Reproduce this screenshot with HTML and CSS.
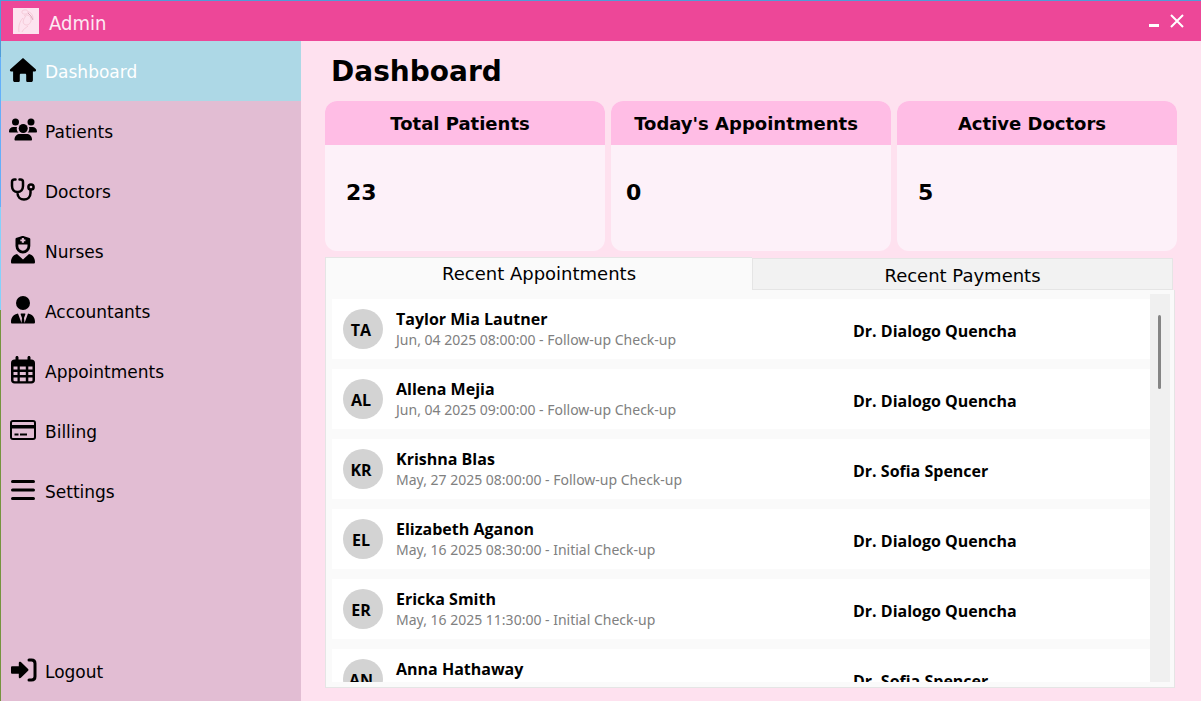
FILE: index.html
```html
<!DOCTYPE html>
<html lang="en">
  <head>
    <meta charset="UTF-8">
    <title>Admin</title>
    <link rel="stylesheet" href="styles.css">
  </head>
  <body>
    <header class="titlebar">
      <svg class="logo" viewBox="0 0 26 26">
        <rect width="26" height="26" fill="#fde3ef"/>
        <g fill="none" stroke="#f6cbd9" stroke-width="1">
          <path d="M9 3c3-2 6-1 6 1s-4 3-6 1zM15 4c3 0 5 3 5 7M11 8c4-3 8 1 7 5s-5 5-7 3 0-6 2-8M10 10c-3 3-5 8-4 14M9 24c1-3 4-4 6-6"/>
          <path d="M15 5l3 3 2 4" stroke="#dba9bd"/>
        </g>
      </svg>
      <span class="titlebar-text">Admin</span>
      <div class="window-buttons">
        <button type="button" aria-label="Minimize">
          <svg width="14" height="14" viewBox="0 0 14 14"><path d="M2 10h10v3H2z" fill="#fff"/></svg>
        </button>
        <button type="button" aria-label="Close">
          <svg width="14" height="14" viewBox="0 0 14 14"><path d="M1 1l12 12M13 1L1 13" stroke="#fff" stroke-width="2"/></svg>
        </button>
      </div>
    </header>

    <div class="layout">
      <nav class="sidebar">
        <a href="#" class="nav-item active">
          <svg class="icon" viewBox="0 0 28 28"><path d="M14.900 2.700c-.5-.5-1.300-.5-1.800 0L1.300 13.200c-.8.800-.3 2.200.8 2.200h2v8.800c0 1.200.7 1.800 1.800 1.800h3.300c1 0 1.600-.6 1.600-1.600V19c0-.8.400-1.200 1.200-1.200h4c.8 0 1.200.4 1.200 1.200v5.400c0 1 .6 1.600 1.600 1.600h3.300c1.100 0 1.800-.6 1.800-1.800v-8.800h2c1.100 0 1.600-1.400.8-2.200z"/></svg>
          Dashboard
        </a>
        <a href="#" class="nav-item">
          <svg class="icon" viewBox="0 0 28 28"><circle cx="6.500" cy="6" r="3.500"/><circle cx="22" cy="6" r="3.500"/><path d="M0 15.500C0 12.500 2 11 4.500 11H8c-.6 2.200-.2 4.200 1.400 5.500H1c-.6 0-1-.4-1-1zM28 15.500c0-3-2-4.500-4.500-4.500H20c.6 2.200.2 4.200-1.400 5.500H27c.6 0 1-.4 1-1z"/><circle cx="14.200" cy="12.500" r="4.500"/><path d="M5.500 23.500C5.500 20 8 18 11 18h6.500c3 0 5.500 2 5.500 5.500 0 .6-.4 1-1 1H6.500c-.6 0-1-.4-1-1z"/></svg>
          Patients
        </a>
        <a href="#" class="nav-item">
          <svg class="icon stroke" viewBox="0 0 28 28"><path d="M6.500 3.500h-1C4 3.500 3 4.200 3 6v4c0 3.500 2.300 6 5.500 6S14 13.500 14 10V6c0-1.800-1-2.500-2.500-2.500h-1M8.500 16v1c0 4 3 6.500 6.500 6.500s6.500-2.500 6.500-6.500v-3"/><circle cx="22" cy="11" r="2.600"/></svg>
          Doctors
        </a>
        <a href="#" class="nav-item">
          <svg class="icon" viewBox="0 0 28 28"><path fill-rule="evenodd" d="M7 2l5.500-1.800c.8-.3 1.700-.3 2.500 0L20.500 2c.5.200.8.500.8 1v7a7.400 7.400 0 0 1-14.800 0V3c0-.5.200-.8.500-1zM9.300 8.500V10c0 2.700 2 4.700 4.600 4.700s4.600-2 4.600-4.700V8.500zM12.800 2v1.500h-1.500v1.800h1.500v1.500h2.100V5.300h1.500V3.500h-1.500V2z"/><path d="M8 18l6 5.500 6-5.500c3.700.7 6 4 6 8 0 1-.5 1.500-1.400 1.500H3.300C2.400 27.500 2 27 2 26c0-4 2.300-7.300 6-8z"/></svg>
          Nurses
        </a>
        <a href="#" class="nav-item">
          <svg class="icon" viewBox="0 0 28 28"><circle cx="14" cy="7" r="7"/><path d="M9 17.500l3.500 9.500.5-5-1.300-3.500c-.2-.6.100-1 .6-1h3.400c.5 0 .8.400.6 1L15 22l.5 5L19 17.500c4.400.7 7 4 7 8.500 0 1-.5 1.500-1.400 1.500H3.300C2.400 27.500 2 27 2 26c0-4.500 2.600-7.800 7-8.500z"/></svg>
          Accountants
        </a>
        <a href="#" class="nav-item">
          <svg class="icon" viewBox="0 0 28 28"><path fill-rule="evenodd" d="M8 0c.9 0 1.500.6 1.500 1.500V3.500h9V1.500C18.500.6 19.100 0 20 0s1.500.6 1.500 1.500v2h1C24.700 3.500 26 4.900 26 7v17c0 2.200-1.300 3.500-3.500 3.500h-17C3.300 27.500 2 26.200 2 24V7c0-2.100 1.300-3.500 3.500-3.500h1v-2C6.500.6 7.100 0 8 0zM4.500 10.500v3h4v-3zm6.300 0v3h6v-3zm8.500 0v3h4.200v-3zM4.500 16v3h4v-3zm6.300 0v3h6v-3zm8.500 0v3h4.200v-3zM4.500 21.500V24c0 .8.400 1.200 1.200 1.200h2.800v-3.700zm6.300 0v3.700h6v-3.700zm8.500 0v3.700h3c.8 0 1.200-.4 1.200-1.200v-2.500z"/></svg>
          Appointments
        </a>
        <a href="#" class="nav-item">
          <svg class="icon" viewBox="0 0 28 28"><path fill-rule="evenodd" d="M4 4h20c2 0 3 1.200 3 3v14c0 1.900-1 3-3 3H4c-2 0-3-1.100-3-3V7c0-1.800 1-3 3-3zM4 6c-.7 0-1 .4-1 1v2h22V7c0-.6-.3-1-1-1zM3 12.500V21c0 .7.300 1 1 1h20c.7 0 1-.3 1-1v-8.500zM5.500 17.500h4v2h-4zM11 17.500h7v2h-7z"/></svg>
          Billing
        </a>
        <a href="#" class="nav-item">
          <svg class="icon stroke" viewBox="0 0 28 28"><path stroke-width="3" d="M3.500 5.500h21M3.500 14h21M3.500 22.500h21"/></svg>
          Settings
        </a>
        <a href="#" class="nav-item logout">
          <svg class="icon" viewBox="0 0 28 28"><path d="M2 11.500c0-.8.500-1.300 1.300-1.300h6.500V7c0-1.200 1.200-1.700 2.100-.9l7.200 7c.5.500.5 1.200 0 1.700l-7.200 7c-.9.900-2.100.3-2.100-.9v-3.200H3.300c-.8 0-1.300-.5-1.300-1.300z"/><path d="M20 4h2.500c2.300 0 3.500 1.300 3.500 3.500v13c0 2.300-1.200 3.500-3.500 3.500H20" fill="none" stroke="#000" stroke-width="3" stroke-linecap="round"/></svg>
          Logout
        </a>
      </nav>

      <main class="content">
        <h1>Dashboard</h1>

        <section class="cards">
          <div class="card">
            <h2>Total Patients</h2>
            <p class="card-value">23</p>
          </div>
          <div class="card compact">
            <h2>Today's Appointments</h2>
            <p class="card-value">0</p>
          </div>
          <div class="card">
            <h2>Active Doctors</h2>
            <p class="card-value">5</p>
          </div>
        </section>

        <section class="recent">
          <div class="tabs" role="tablist">
            <button type="button" class="tab selected" role="tab" aria-selected="true">Recent Appointments</button>
            <button type="button" class="tab" role="tab" aria-selected="false">Recent Payments</button>
          </div>

          <div class="panel" role="tabpanel">
            <ul class="list">
              <li class="row">
                <span class="avatar">TA</span>
                <div class="info">
                  <span class="name">Taylor Mia Lautner</span>
                  <span class="date">Jun, 04 2025 08:00:00 - Follow-up Check-up</span>
                </div>
                <span class="doctor">Dr. Dialogo Quencha</span>
              </li>
              <li class="row">
                <span class="avatar">AL</span>
                <div class="info">
                  <span class="name">Allena Mejia</span>
                  <span class="date">Jun, 04 2025 09:00:00 - Follow-up Check-up</span>
                </div>
                <span class="doctor">Dr. Dialogo Quencha</span>
              </li>
              <li class="row">
                <span class="avatar">KR</span>
                <div class="info">
                  <span class="name">Krishna Blas</span>
                  <span class="date">May, 27 2025 08:00:00 - Follow-up Check-up</span>
                </div>
                <span class="doctor">Dr. Sofia Spencer</span>
              </li>
              <li class="row">
                <span class="avatar">EL</span>
                <div class="info">
                  <span class="name">Elizabeth Aganon</span>
                  <span class="date">May, 16 2025 08:30:00 - Initial Check-up</span>
                </div>
                <span class="doctor">Dr. Dialogo Quencha</span>
              </li>
              <li class="row">
                <span class="avatar">ER</span>
                <div class="info">
                  <span class="name">Ericka Smith</span>
                  <span class="date">May, 16 2025 11:30:00 - Initial Check-up</span>
                </div>
                <span class="doctor">Dr. Dialogo Quencha</span>
              </li>
              <li class="row">
                <span class="avatar">AN</span>
                <div class="info">
                  <span class="name">Anna Hathaway</span>
                </div>
                <span class="doctor">Dr. Sofia Spencer</span>
              </li>
            </ul>
            <div class="scrollbar"><div class="thumb"></div></div>
          </div>
        </section>
      </main>
    </div>
  </body>
</html>
```

FILE: styles.css
```css
* {
  box-sizing: border-box;
}
body {
  display: flex;
  flex-direction: column;
  height: 100vh;
  margin: 0;
  padding: 1px 0 0 1px;
  overflow: hidden;
  font-family: "DejaVu Sans", Verdana, sans-serif;
  color: #000;
  /* strip of desktop showing at the window edge */
  background: linear-gradient(#4f9cd8 57px, #64affa 57px, #64affa 207px, #84d2fc 207px, #84d2fc 310px, #76943f 310px);
}
button {
  border: none;
  padding: 0;
  font-family: inherit;
  color: inherit;
  cursor: pointer;
}

/* title bar */
.titlebar {
  display: flex;
  align-items: center;
  height: 40px;
  padding: 0 17px 0 12px;
  background: #ed4798;
}
.logo {
  width: 26px;
  height: 26px;
}
.titlebar-text {
  margin-left: 10px;
  padding-top: 4px;
  font-family: "DejaVu Sans Condensed", "DejaVu Sans", sans-serif;
  font-size: 20px;
  color: #fdeaf3;
}
.window-buttons {
  display: flex;
  gap: 9px;
  margin-left: auto;
}
.window-buttons button {
  display: flex;
  background: none;
}

/* sidebar */
.layout {
  display: flex;
  flex: 1;
  min-height: 0;
}
.sidebar {
  display: flex;
  flex-direction: column;
  flex: 0 0 300px;
  background: #e2bdd3;
}
.nav-item {
  display: flex;
  align-items: center;
  gap: 8px;
  height: 60px;
  padding: 2px 0 0 8px;
  font-size: 17px;
  color: #000;
  text-decoration: none;
}
.nav-item.active {
  background: #add8e6;
  color: #fff;
}
.logout {
  margin-top: auto;
}
.icon {
  width: 28px;
  height: 28px;
  margin-bottom: 4px;
  fill: #000;
}
.icon.stroke {
  fill: none;
  stroke: #000;
  stroke-width: 2.5px;
  stroke-linecap: round;
}

/* main area */
.content {
  display: flex;
  flex-direction: column;
  flex: 1;
  min-width: 0;
  padding: 0 24px 13px;
  background: #fee1ef;
}
h1 {
  margin: 0;
  padding: 2px 0 0 6px;
  font-size: 28px;
  line-height: 58px;
}
.cards {
  display: grid;
  grid-template-columns: repeat(3, 1fr);
  gap: 6px;
}
.card {
  height: 150px;
  border-radius: 12px;
  background: #fdf1f9;
  overflow: hidden;
}
.card h2 {
  margin: 0;
  padding: 2px 10px 0 0;
  background: #ffbde5;
  font-size: 18px;
  line-height: 42px;
  text-align: center;
}
.card-value {
  margin: 0;
  padding: 32px 21px;
  font-size: 22px;
  font-weight: bold;
  line-height: 32px;
}
.compact .card-value {
  padding-left: 15px;
}

/* tabs and list */
.recent {
  display: flex;
  flex-direction: column;
  flex: 1;
  min-height: 0;
  margin-top: 6px;
}
.tabs {
  display: flex;
  align-items: flex-end;
  padding-right: 4px;
}
.tab {
  flex: 1 1 180px;
  height: 32px;
  padding-top: 2px;
  border: 1px solid #e5e5e5;
  background: #f2f2f2;
  font-size: 18px;
}
.tab.selected {
  flex-basis: 186px;
  height: 33px;
  padding: 0 0 2px;
  border-width: 1px 0 0 1px;
  background: #fafafa;
}
.panel {
  display: flex;
  flex: 1;
  min-height: 0;
  margin-right: 2px;
  padding: 4px 4px 5px 6px;
  border: 1px solid #e5e5e5;
  border-top: none;
  background: #fafafa;
}
.list {
  display: flex;
  flex-direction: column;
  gap: 10px;
  flex: 1;
  margin: 0;
  padding: 5px 0 0;
  overflow: hidden;
  list-style: none;
}
.row {
  display: flex;
  align-items: center;
  flex: 0 0 60px;
  padding-left: 11px;
  background: #fff;
  font-family: "Open Sans", "Segoe UI", sans-serif;
  font-size: 16px;
}
.avatar {
  width: 40px;
  height: 40px;
  padding-right: 4px;
  border-radius: 50%;
  background: #d3d3d3;
  font-weight: bold;
  line-height: 42px;
  text-align: center;
}
.info {
  display: flex;
  flex-direction: column;
  flex: 1;
  height: 42px;
  margin-left: 13px;
}
.name,
.doctor {
  font-weight: bold;
  line-height: 22px;
}
.date {
  font-family: "Noto Sans", "Segoe UI", sans-serif;
  font-size: 14px;
  line-height: 20px;
  color: #808080;
}
.doctor {
  flex: 0 0 297px;
  padding-top: 4px;
}
.scrollbar {
  flex: 0 0 20px;
  padding: 21px 9px 0 8px;
  background: #f0f0f0;
}
.thumb {
  height: 74px;
  border-radius: 2px;
  background: #858585;
}
```
